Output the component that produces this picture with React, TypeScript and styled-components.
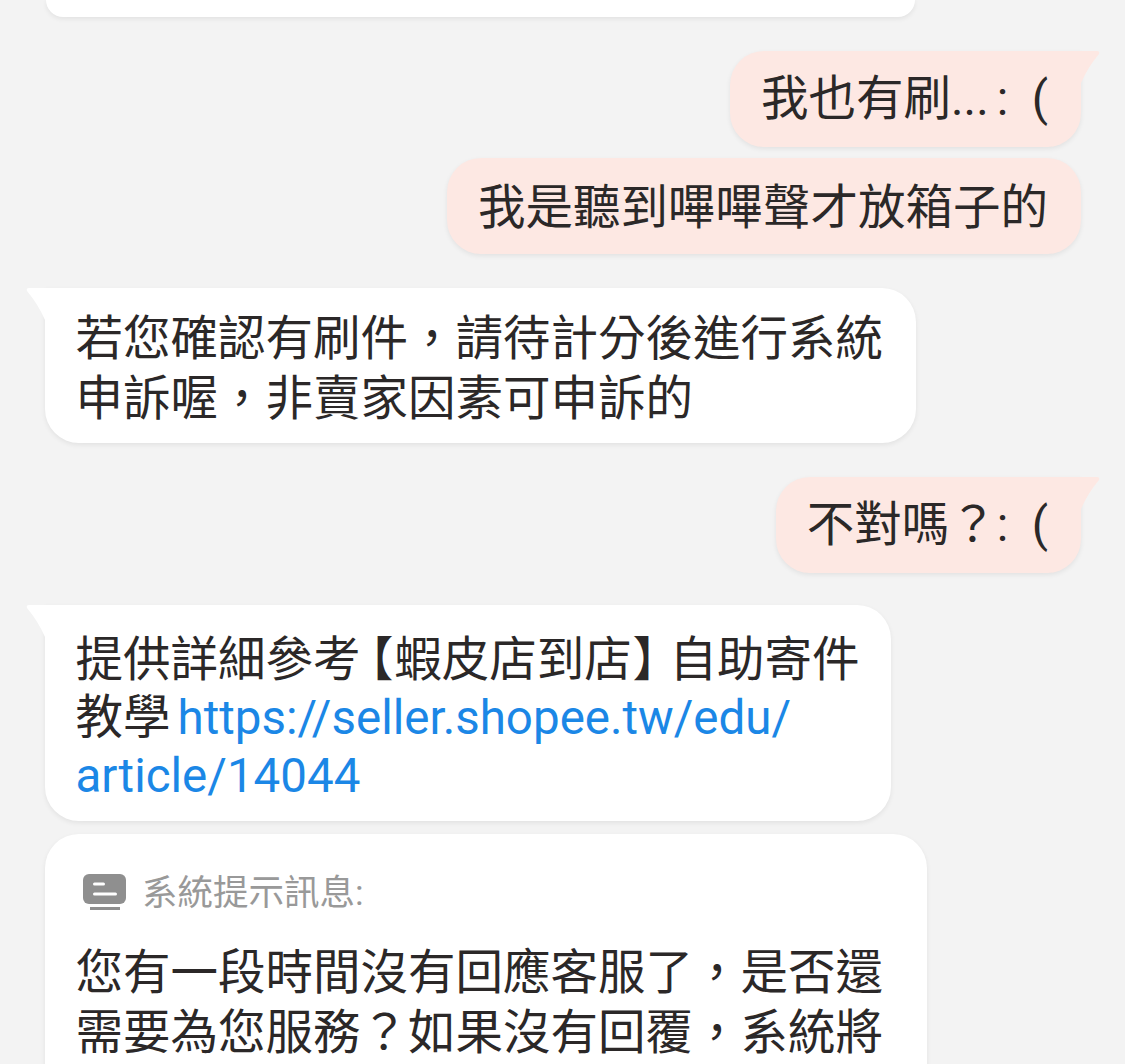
import React from 'react';
import styled, { createGlobalStyle } from 'styled-components';

const GlobalStyle = createGlobalStyle`
  html, body {
    margin: 0;
    padding: 0;
    height: 100%;
    overflow: hidden;
    background: #f3f3f3;
  }
  #root {
    height: 100%;
  }
`;

const Thread = styled.div`
  width: 1125px;
  height: 1064px;
  overflow: hidden;
  box-sizing: border-box;
  background: #f3f3f3;
  display: flex;
  flex-direction: column;
  font-family: Roboto, "Noto Sans CJK TC", sans-serif;
  font-size: 47.5px;
  line-height: 59.5px;
  color: #2b2828;
`;

const minePadding = (tail?: boolean) =>
  tail ? '19px 33px 17.5px 31px' : '21px 33px 15.5px 31px';

const Bubble = styled.div<{ $mine?: boolean; $gap: number; $tail?: boolean }>`
  position: relative;
  flex: none;
  box-sizing: border-box;
  margin-top: ${p => p.$gap}px;
  align-self: ${p => (p.$mine ? 'flex-end' : 'flex-start')};
  margin-left: ${p => (p.$mine ? 0 : 45)}px;
  margin-right: ${p => (p.$mine ? 44 : 0)}px;
  padding: ${p => (p.$mine ? minePadding(p.$tail) : '22px 33px 14px 30.5px')};
  background: ${p => (p.$mine ? '#fde8e3' : '#fff')};
  border-radius: 34px;
  border-top-left-radius: ${p => (!p.$mine && p.$tail ? 0 : 34)}px;
  border-top-right-radius: ${p => (p.$mine && p.$tail ? 0 : 34)}px;
  box-shadow: 0 2px 5px rgba(0, 0, 0, 0.07);
  white-space: pre;

  ${p =>
    p.$tail
      ? `&::before {
    content: '';
    position: absolute;
    top: 0;
    ${p.$mine ? 'right: -19px;' : 'left: -19px;'}
    width: 20px;
    height: 32px;
    background: ${p.$mine ? '#fde8e3' : '#fff'};
    clip-path: ${
      p.$mine
        ? `path('M0 0 H17 Q20 0 19 3 Q8 16 1 32 L0 32 Z')`
        : `path('M20 0 H3 Q0 0 1 3 Q12 16 19 32 L20 32 Z')`
    };
  }`
      : ''}
`;

const LinkBubble = styled(Bubble)`
  padding: 26px 31.5px 16px 30.5px;
  line-height: 58px;
`;

const CutOffBubble = styled.div`
  flex: none;
  box-sizing: border-box;
  width: 869px;
  height: 17px;
  margin-left: 46px;
  background: #fff;
  border-radius: 0 0 34px 34px;
  box-shadow: 0 2px 5px rgba(0, 0, 0, 0.07);
`;

const SystemCard = styled.div`
  flex: none;
  box-sizing: border-box;
  width: 882px;
  height: 300px;
  margin-top: 13px;
  margin-left: 45px;
  padding: 36px 30px 0 30.5px;
  background: #fff;
  border-radius: 34px 34px 0 0;
  box-shadow: 0 2px 5px rgba(0, 0, 0, 0.07);
  white-space: pre;
`;

const SystemHead = styled.div`
  display: flex;
  align-items: center;
  gap: 15px;
  margin-left: 7.5px;
  height: 46px;
  margin-bottom: 28px;
  color: #999;
  font-size: 35.5px;
  line-height: 46px;
`;

const Link = styled.a<{ $first?: boolean }>`
  color: #1b87e6;
  text-decoration: none;
  margin-left: ${p => (p.$first ? 7 : 0)}px;
`;

const Dots = styled.span`
  margin-right: 8px;
`;

// proportional metrics pull the full-width brackets in, as in the reference
const Bracket = styled.span<{ $before: number; $after: number }>`
  font-feature-settings: "palt";
  margin-left: ${p => p.$before}px;
  margin-right: ${p => p.$after}px;
`;

const SystemIcon = () => (
  <svg width="44" height="38" viewBox="0 0 44 38">
    <rect x="0" y="0" width="43" height="30" rx="6" fill="#8f8f8f" />
    <rect x="10" y="8.5" width="12" height="3" rx="1.5" fill="#fff" />
    <rect x="10" y="18.5" width="24" height="3" rx="1.5" fill="#fff" />
    <rect x="7" y="33" width="30" height="3" fill="#8f8f8f" />
  </svg>
);

export default function App() {
  return (
    <>
      <GlobalStyle />
      <Thread>
        <CutOffBubble />
        <Bubble $mine $tail $gap={34}>我也有刷<Dots>...</Dots>:  (</Bubble>
        <Bubble $mine $gap={11}>我是聽到嗶嗶聲才放箱子的</Bubble>
        <Bubble $tail $gap={34}>
          {'若您確認有刷件，請待計分後進行系統\n申訴喔，非賣家因素可申訴的'}
        </Bubble>
        <Bubble $mine $tail $gap={34}>不對嗎？:  (</Bubble>
        <LinkBubble $tail $gap={32}>
          提供詳細參考<Bracket $before={8} $after={2}>【</Bracket>蝦皮店到店<Bracket $before={2} $after={12}>】</Bracket>自助寄件{'\n'}教學
          <Link $first href="#">https://seller.shopee.tw/edu/</Link>{'\n'}
          <Link href="#">article/14044</Link>
        </LinkBubble>
        <SystemCard>
          <SystemHead>
            <SystemIcon />
            系統提示訊息:
          </SystemHead>
          {'您有一段時間沒有回應客服了，是否還\n需要為您服務？如果沒有回覆，系統將'}
        </SystemCard>
      </Thread>
    </>
  );
}
